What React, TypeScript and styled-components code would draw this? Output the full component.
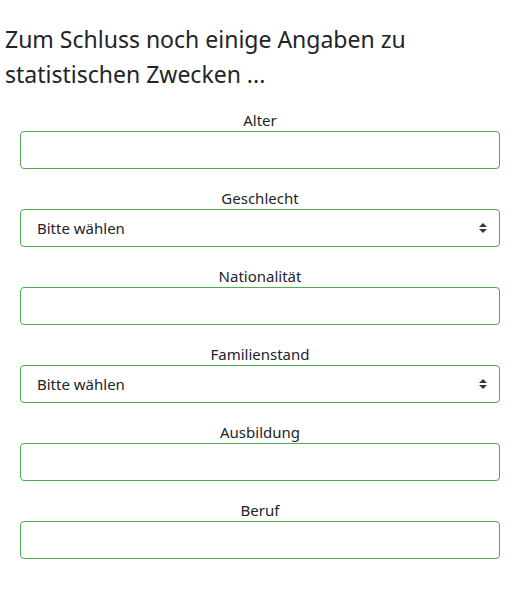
import styled, { createGlobalStyle } from "styled-components";

const GlobalStyle = createGlobalStyle`
  body {
    margin: 0;
    font-family: "Noto Sans", "Open Sans", sans-serif;
    color: #212529;
    background: #fff;
  }
  * {
    box-sizing: border-box;
  }
`;

const Page = styled.div`
  width: 530px;
  padding: 22px 30px 30px 20px;
`;

const Title = styled.h4`
  margin: 0 0 15px -15px;
  font-size: 23px;
  font-weight: 400;
  line-height: 35px;
  color: #212529;
`;

const Group = styled.div`
  display: flex;
  flex-direction: column;
  margin-bottom: 16px;
`;

const Label = styled.label`
  text-align: center;
  font-size: 15px;
  line-height: 24px;
  padding-top: 1px;
  margin-bottom: -1px;
`;

const Field = styled.input`
  width: 100%;
  height: 38px;
  padding: 6px 16px;
  font-family: inherit;
  font-size: 15px;
  color: #212529;
  background: #fff;
  border: 1px solid #4cae4f;
  border-radius: 4px;
  outline: none;
`;

const SelectWrap = styled.div`
  position: relative;
`;

const Select = styled.select`
  width: 100%;
  height: 38px;
  padding: 6px 36px 6px 16px;
  font-family: inherit;
  font-size: 15px;
  color: #212529;
  background: #fff;
  border: 1px solid #4cae4f;
  border-radius: 4px;
  appearance: none;
  outline: none;
`;

const Arrows = styled.svg`
  position: absolute;
  right: 13px;
  top: 14px;
  pointer-events: none;
`;

const fields = [
  { label: "Alter", select: false },
  { label: "Geschlecht", select: true },
  { label: "Nationalität", select: false },
  { label: "Familienstand", select: true },
  { label: "Ausbildung", select: false },
  { label: "Beruf", select: false },
];

const App = () => {
  return (
    <Page>
      <GlobalStyle />
      <Title>Zum Schluss noch einige Angaben zu statistischen Zwecken ...</Title>
      {fields.map((f) =>
        f.select ? (
          <Group key={f.label}>
            <Label>{f.label}</Label>
            <SelectWrap>
              <Select defaultValue="">
                <option value="">Bitte wählen</option>
              </Select>
              <Arrows width="8" height="10" viewBox="0 0 4 5">
                <path d="M2 0L0 2h4zm0 5L0 3h4z" fill="#343a40" />
              </Arrows>
            </SelectWrap>
          </Group>
        ) : (
          <Group key={f.label}>
            <Label>{f.label}</Label>
            <Field type="text" />
          </Group>
        )
      )}
    </Page>
  );
};

export default App;
